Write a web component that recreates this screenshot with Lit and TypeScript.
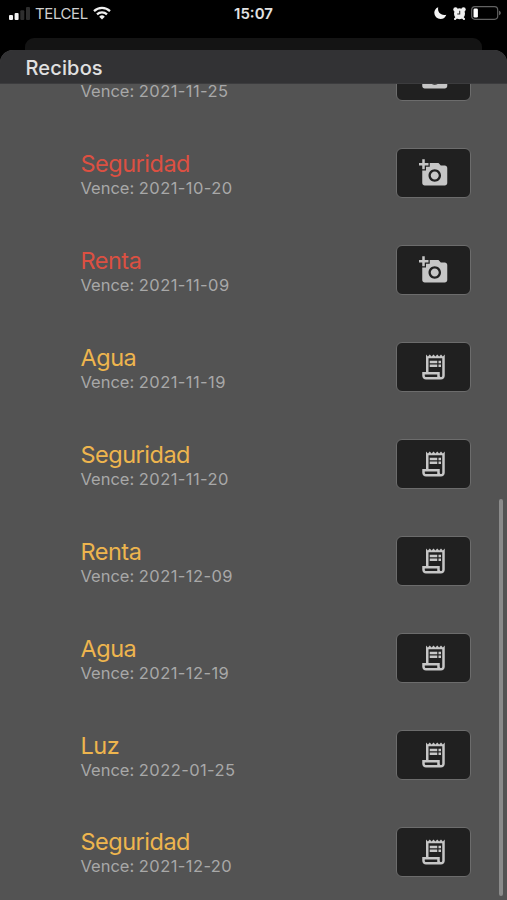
import { LitElement, html, css, svg, nothing } from "lit";
import { customElement, property } from "lit/decorators.js";

type Status = "overdue" | "pending";
interface Receipt {
  name?: string;
  due: string;
  status: Status;
}

const RECEIPTS: Receipt[] = [
  { due: "2021-11-25", status: "overdue" },
  { name: "Seguridad", due: "2021-10-20", status: "overdue" },
  { name: "Renta", due: "2021-11-09", status: "overdue" },
  { name: "Agua", due: "2021-11-19", status: "pending" },
  { name: "Seguridad", due: "2021-11-20", status: "pending" },
  { name: "Renta", due: "2021-12-09", status: "pending" },
  { name: "Agua", due: "2021-12-19", status: "pending" },
  { name: "Luz", due: "2022-01-25", status: "pending" },
  { name: "Seguridad", due: "2021-12-20", status: "pending" },
];

const addPhoto = svg`<path d="M3 4V1h2v3h3v2H5v3H3V6H0V4h3zm3 6V7h3V4h7l1.83 2H21c1.1 0 2 .9 2 2v12c0 1.1-.9 2-2 2H5c-1.1 0-2-.9-2-2V10h3zm7 9c2.76 0 5-2.24 5-5s-2.24-5-5-5-5 2.24-5 5 2.24 5 5 5zm-3.2-5c0 1.77 1.43 3.2 3.2 3.2s3.2-1.43 3.2-3.2-1.43-3.2-3.2-3.2-3.2 1.43-3.2 3.2z"/>`;
const receiptLong = svg`<path d="M19.5 3.5 18 2l-1.5 1.5L15 2l-1.5 1.5L12 2l-1.5 1.5L9 2 7.5 3.5 6 2v14H3v3c0 1.66 1.34 3 3 3h12c1.66 0 3-1.34 3-3V2l-1.5 1.5zM15 20H6c-.55 0-1-.45-1-1v-1h10v2zm4-1c0 .55-.45 1-1 1s-1-.45-1-1v-3H8V5h11v14z"/><path d="M9 7h6v2H9zM16 7h2v2h-2zM9 10h6v2H9zM16 10h2v2h-2z"/>`;

@customElement("status-bar")
export class StatusBar extends LitElement {
  static styles = css`
    :host {
      display: grid;
      grid-template-columns: 1fr auto 1fr;
      align-items: center;
      height: 28px;
      padding: 0 6px 0 9px;
      color: #e2e2e2;
      font-size: 15px;
    }
    .side { display: flex; align-items: center; height: 26px; align-self: start; }
    .end { justify-content: flex-end; }
    .carrier { margin: 0 5px 0 5px; padding-top: 1px; letter-spacing: -0.4px; color: #cfcfcf; }
    .time { margin-right: 3px; padding-bottom: 1px; font-weight: 600; letter-spacing: 0; }
    svg { display: block; }
    .moon { margin-right: 6px; }
    .alarm { margin-right: 5px; }
  `;
  render() {
    return html`
      <div class="side">
        <svg width="21" height="13" viewBox="0 0 21 13">
          <rect x="0" y="8" width="4" height="5" rx="1" fill="#f2f2f2" />
          <rect x="5.6" y="6" width="4" height="7" rx="1" fill="#f2f2f2" />
          <rect x="11.3" y="3.2" width="4" height="9.8" rx="1" fill="#2e2e2e" />
          <rect x="17" y="0" width="4" height="13" rx="1" fill="#2e2e2e" />
        </svg>
        <span class="carrier">TELCEL</span>
        <svg width="18" height="14" viewBox="0 0 18 14" fill="none" stroke="#f0f0f0" stroke-width="2.2">
          <path d="M1 5.1a11.4 11.4 0 0 1 16 0" />
          <path d="M4 8.4a7.1 7.1 0 0 1 10 0" />
          <path d="M9 13.6 6.2 10.7a4 4 0 0 1 5.6 0z" fill="#f0f0f0" stroke="none" />
        </svg>
      </div>
      <span class="time">15:07</span>
      <div class="side end">
        <svg class="moon" width="13" height="12" viewBox="0 0 13 12" fill="#f4f4f4">
          <path d="M4.2.2C3.2 4.8 6.8 9 12.3 7.7A6.3 6.3 0 0 1 6.5 12 6.2 6.2 0 0 1 .3 5.8C.3 3.3 1.8 1 4.2.2z" />
        </svg>
        <svg class="alarm" width="13" height="13" viewBox="0 0 13 13">
          <circle cx="2.5" cy="2.5" r="2.2" fill="#f0f0f0" />
          <circle cx="10.5" cy="2.5" r="2.2" fill="#f0f0f0" />
          <path d="M2 12 4 10M11 12 9 10" stroke="#f0f0f0" stroke-width="2" stroke-linecap="round" />
          <circle cx="6.5" cy="6.7" r="5.5" fill="#f0f0f0" />
          <path d="M6.7 3.8v3.2H4.2" fill="none" stroke="#333" stroke-width="1.1" />
        </svg>
        <svg width="30" height="14" viewBox="0 0 30 14">
          <rect x="0.7" y="0.7" width="26" height="12.6" rx="3.2" fill="none" stroke="#626262" stroke-width="1.2" />
          <rect x="2.5" y="2.5" width="4.4" height="9" rx="1.3" fill="#fff" />
          <path d="M28 4.8c1.3.4 1.8 1.2 1.8 2.2s-.5 1.8-1.8 2.2z" fill="#626262" />
        </svg>
      </div>
    `;
  }
}

@customElement("receipt-row")
export class ReceiptRow extends LitElement {
  static styles = css`
    :host {
      display: flex;
      align-items: center;
      justify-content: space-between;
      box-sizing: border-box;
      height: 96.9px;
      padding: 0 36px 0 80.5px;
    }
    .name { font-size: 23.5px; line-height: 28px; letter-spacing: -0.5px; }
    .overdue { color: #dc5042; }
    .pending { color: #eeb54e; }
    .due {
      color: #a8a8a8;
      font-size: 16.5px;
      line-height: 20px;
      white-space: nowrap;
    }
    .date { letter-spacing: 0.42px; }
    .text { display: flex; flex-direction: column; justify-content: flex-end; height: 49.8px; }
    .action {
      display: flex;
      align-items: center;
      justify-content: center;
      box-sizing: border-box;
      width: 75px;
      height: 50px;
      padding: 0;
      background: #202020;
      border: 1px solid #6c6c6c;
      border-radius: 6px;
    }
    svg { display: block; fill: #c6c6c6; }
  `;
  @property({ attribute: false }) receipt!: Receipt;
  render() {
    const { name, due, status } = this.receipt;
    return html`
      <div class="text">
        ${name ? html`<div class="name ${status}">${name}</div>` : nothing}
        <div class="due">Vence: <span class="date">${due}</span></div>
      </div>
      <button class="action" aria-label="Recibo">
        <svg width="30" height="30" viewBox="0.4 0 24 24">
          ${status === "overdue" ? addPhoto : receiptLong}
        </svg>
      </button>
    `;
  }
}

@customElement("app-root")
export class AppRoot extends LitElement {
  static styles = css`
    :host {
      display: flex;
      flex-direction: column;
      height: 900px;
      overflow: hidden;
      background: #000;
      font-family: Inter, "Liberation Sans", sans-serif;
    }
    .behind {
      flex: none;
      height: 12px;
      margin: 10px 25px 0;
      background: #141414;
      border-radius: 9px 9px 0 0;
    }
    .sheet {
      position: relative;
      flex: 1;
      min-height: 0;
      display: flex;
      flex-direction: column;
      overflow: hidden;
      border-radius: 13px 13px 0 0;
      background: #535353;
    }
    .header {
      flex: none;
      box-sizing: border-box;
      height: 34px;
      padding: 4px 25.5px 0;
      background: #323234;
      border-bottom: 1px solid #3c3c3e;
      color: #e0e0e0;
      font-size: 20px;
      font-weight: 500;
      line-height: 28px;
      letter-spacing: 0.15px;
    }
    .list { flex: 1; min-height: 0; overflow: hidden; }
    .rows { margin-top: -56px; }
    .thumb {
      position: absolute;
      right: 4px;
      top: 449px;
      bottom: 4px;
      width: 4px;
      border-radius: 2px;
      background: #8b8b8b;
    }
  `;
  render() {
    return html`
      <status-bar></status-bar>
      <div class="behind"></div>
      <div class="sheet">
        <div class="header">Recibos</div>
        <div class="list">
          <div class="rows">
            ${RECEIPTS.map((r) => html`<receipt-row .receipt=${r}></receipt-row>`)}
          </div>
        </div>
        <div class="thumb"></div>
      </div>
    `;
  }
}
